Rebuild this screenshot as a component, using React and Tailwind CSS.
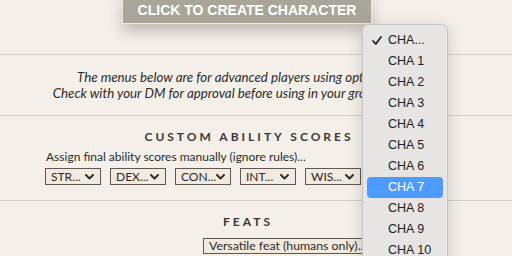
import React from "react";

const Chevron = () => (
  <svg width="9" height="6" viewBox="0 0 9 6" className="shrink-0">
    <path d="M1 1 L4.5 4.5 L8 1" fill="none" stroke="#2a2a2a" strokeWidth="1.9" strokeLinecap="round" strokeLinejoin="round" />
  </svg>
);

const Sel = ({ label }) => (
  <div className="flex items-center justify-between w-[56px] h-[17px] border border-[#5b5853] bg-[#f2eadf] pl-[5px] pr-[6px] text-[12px] leading-none text-[#2a2a2a]">
    <span>{label}</span>
    <Chevron />
  </div>
);

export default function App() {
  const items = ["CHA...", "CHA 1", "CHA 2", "CHA 3", "CHA 4", "CHA 5", "CHA 6", "CHA 7", "CHA 8", "CHA 9", "CHA 10", "CHA 11"];
  return (
    <div className="relative w-[512px] h-[256px] overflow-hidden bg-[#f4f0e9]" style={{ fontFamily: "Lato, 'Open Sans', sans-serif" }}>
      <div className="flex flex-col items-center w-[494px]">
        <div className="-mt-[6px] w-[250px] h-[30px] bg-[#a9a598] border border-[#ece9e2] flex items-end justify-center pb-[6px] shadow-[0_8px_14px_rgba(0,0,0,0.22)]">
          <span className="text-white font-bold text-[14px] leading-none" style={{ fontFamily: "'Liberation Sans', Arial, sans-serif" }}>CLICK TO CREATE CHARACTER</span>
        </div>
      </div>
      <div className="mt-[30px] h-px w-full bg-[#d3cec6]" />
      <div className="mt-[14px] w-[500px] flex flex-col items-center italic text-[13.3px] leading-[16px] text-[#2b2b2b] whitespace-nowrap">
        <div>The menus below are for advanced players using optional rules.</div>
        <div>Check with your DM for approval before using in your group's campaign.</div>
      </div>
      <div className="mt-[14px] h-px w-full bg-[#d3cec6]" />
      <div className="mt-[13px] w-[498px] flex justify-center">
        <span className="font-bold text-[12px] leading-[16px] tracking-[3px] text-[#3a3836]">CUSTOM ABILITY SCORES</span>
      </div>
      <div className="mt-[4px] pl-[46px] text-[12px] leading-[16px] text-[#2b2b2b]">Assign final ability scores manually (ignore rules)...</div>
      <div className="mt-[3px] pl-[45px] flex gap-[9px]">
        <Sel label="STR..." />
        <Sel label="DEX..." />
        <Sel label="CON..." />
        <Sel label="INT..." />
        <Sel label="WIS..." />
        <Sel label="CHA..." />
      </div>
      <div className="mt-[15px] h-px w-full bg-[#d3cec6]" />
      <div className="mt-[13px] w-[496px] flex justify-center">
        <span className="font-bold text-[12px] leading-[16px] tracking-[3px] text-[#3a3836]">FEATS</span>
      </div>
      <div className="mt-[8px] pl-[203px]">
        <div className="flex items-center gap-[5px] w-max h-[16px] border border-[#5b5853] bg-[#f2eadf] pl-[5px] pr-[5px] text-[12.3px] leading-none text-[#2a2a2a] whitespace-nowrap">
          <span>Versatile feat (humans only)...</span>
          <Chevron />
        </div>
      </div>

      <div className="absolute left-[362px] top-[24px] w-[86px] h-[260px] rounded-[6px] border border-[#c9c7c4] bg-[#e6e5e3] pt-[5px] px-[4px] shadow-[0_4px_16px_rgba(0,0,0,0.18)]" style={{ fontFamily: "'Liberation Sans', Arial, sans-serif" }}>
        {items.map((it, i) => (
          <div key={it} className={"relative h-[21px] flex items-center pl-[21px] rounded-[4px] text-[12.5px] " + (i === 7 ? "bg-[#4d9bff] text-white" : "text-[#222]")}>
            {i === 0 && (
              <svg width="10" height="9" viewBox="0 0 10 9" className="absolute left-[5px] top-[6px]">
                <path d="M1 5 L3.8 8 L9 1" fill="none" stroke="#222" strokeWidth="1.8" strokeLinecap="round" strokeLinejoin="round" />
              </svg>
            )}
            {it}
          </div>
        ))}
      </div>
    </div>
  );
}
